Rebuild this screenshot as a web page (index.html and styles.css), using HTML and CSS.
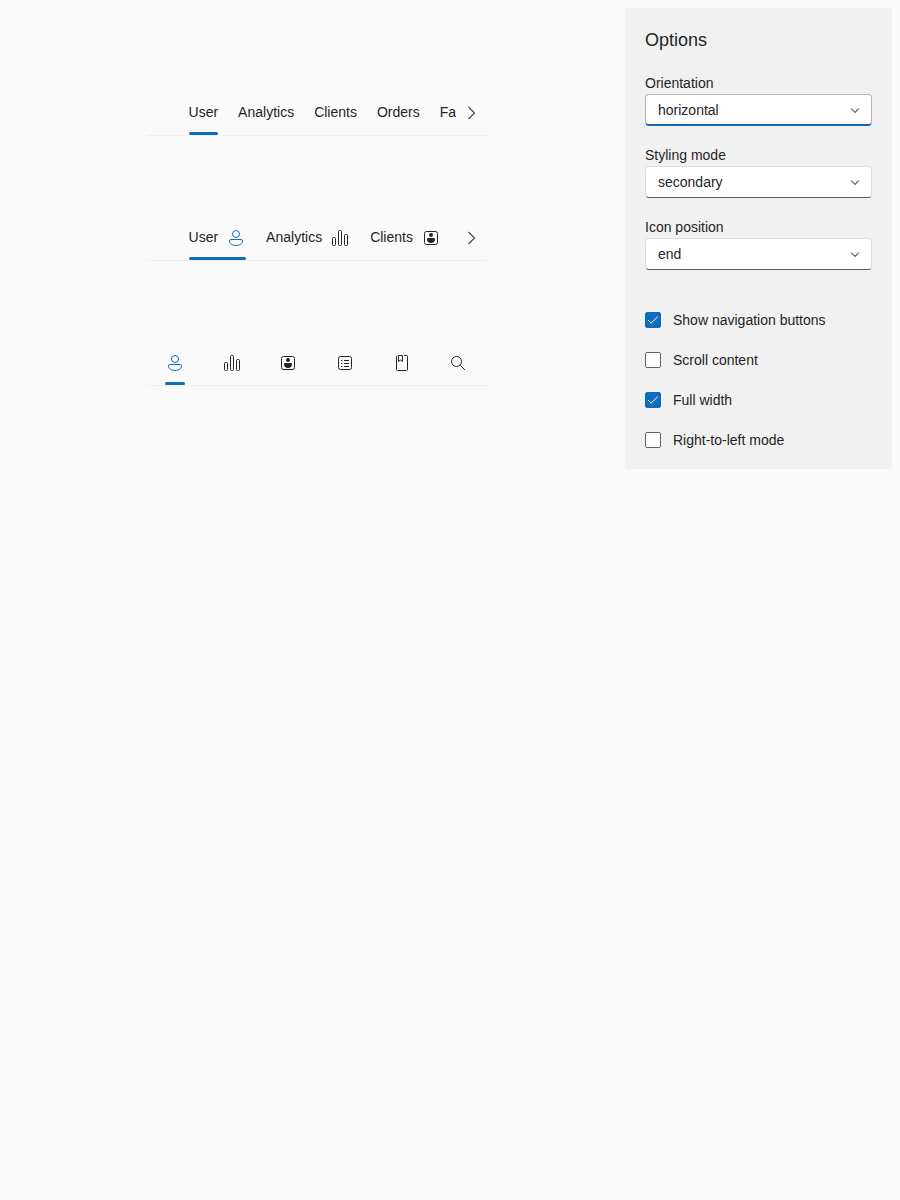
FILE: index.html
```html
<!DOCTYPE html>
<html lang="en">
<head>
<meta charset="utf-8">
<title>Tabs</title>
<link rel="stylesheet" href="styles.css">
</head>
<body>
<svg class="sprite" aria-hidden="true">
  <symbol id="user" viewBox="0 0 20 20"><circle cx="10" cy="6" r="3.5"/><path d="M5 11.5h10a1.5 1.5 0 0 1 1.5 1.5c0 2.7-2.6 4.5-6.5 4.5S3.5 15.7 3.5 13A1.5 1.5 0 0 1 5 11.5z"/></symbol>
  <symbol id="chart" viewBox="0 0 20 20"><rect x="2.5" y="9.5" width="3" height="8" rx="1"/><rect x="8.5" y="2.5" width="3" height="15" rx="1"/><rect x="14.5" y="6.5" width="3" height="11" rx="1"/></symbol>
  <symbol id="contact" viewBox="0 0 20 20"><rect x="3.5" y="3.5" width="13" height="13" rx="2"/><circle class="solid" cx="10" cy="7" r="2"/><path class="solid" d="M7 10h6a1 1 0 0 1 1 1c0 2.500-1.500 4-4 4s-4-1.500-4-4a1 1 0 0 1 1-1z"/></symbol>
  <symbol id="list" viewBox="0 0 20 20"><rect x="3.5" y="3.5" width="13" height="13" rx="2"/><path d="M9 7.5h5M9 10.5h5M9 13.5h5M6 7.5h1.300M6 10.5h1.300M6 13.5h1.300"/></symbol>
  <symbol id="book" viewBox="0 0 20 20"><path d="M6.5 2.5v6l2-1.500 2 1.500v-6zM12 2.5h2.500a1 1 0 0 1 1 1v13a1 1 0 0 1-1 1h-9a1 1 0 0 1-1-1V3.500c0-.4.2-.7.500-.9"/></symbol>
  <symbol id="search" viewBox="0 0 20 20"><circle cx="8.5" cy="8.5" r="5"/><path d="M12.2 12.2l4.700 4.700"/></symbol>
  <symbol id="next" viewBox="0 0 20 20"><path d="M6.500 4l6 6-6 6"/></symbol>
  <symbol id="down" viewBox="0 0 16 16"><path d="M4.200 6.700l3.800 3.800 3.800-3.800"/></symbol>
  <symbol id="check" viewBox="0 0 16 16"><path d="M3 8l3.200 3.200 6.500-6.700"/></symbol>
</svg>
<div class="demo">
  <main class="widgets">
    <div class="tabs">
      <div class="nav"></div>
      <div class="scroller">
        <div class="tab selected"><span>User</span></div>
        <div class="tab"><span>Analytics</span></div>
        <div class="tab"><span>Clients</span></div>
        <div class="tab"><span>Orders</span></div>
        <div class="tab"><span>Fa</span></div>
      </div>
      <div class="nav next"><svg class="icon"><use href="#next"/></svg></div>
    </div>
    <div class="tabs">
      <div class="nav"></div>
      <div class="scroller">
        <div class="tab selected"><span>User</span><svg class="icon"><use href="#user"/></svg></div>
        <div class="tab"><span>Analytics</span><svg class="icon"><use href="#chart"/></svg></div>
        <div class="tab"><span>Clients</span><svg class="icon"><use href="#contact"/></svg></div>
      </div>
      <div class="nav next"><svg class="icon"><use href="#next"/></svg></div>
    </div>
    <div class="tabs stretched">
      <div class="tab selected"><svg class="icon"><use href="#user"/></svg></div>
      <div class="tab"><svg class="icon"><use href="#chart"/></svg></div>
      <div class="tab"><svg class="icon"><use href="#contact"/></svg></div>
      <div class="tab"><svg class="icon"><use href="#list"/></svg></div>
      <div class="tab"><svg class="icon"><use href="#book"/></svg></div>
      <div class="tab"><svg class="icon"><use href="#search"/></svg></div>
    </div>
  </main>
  <aside class="options">
    <h2 class="title">Options</h2>
    <div class="field"><div class="label">Orientation</div><div class="select focused"><span>horizontal</span><svg class="arrow"><use href="#down"/></svg></div></div>
    <div class="field"><div class="label">Styling mode</div><div class="select"><span>secondary</span><svg class="arrow"><use href="#down"/></svg></div></div>
    <div class="field"><div class="label">Icon position</div><div class="select"><span>end</span><svg class="arrow"><use href="#down"/></svg></div></div>
    <div class="checks">
      <div class="check"><span class="box checked"><svg class="mark"><use href="#check"/></svg></span><span>Show navigation buttons</span></div>
      <div class="check"><span class="box"></span><span>Scroll content</span></div>
      <div class="check"><span class="box checked"><svg class="mark"><use href="#check"/></svg></span><span>Full width</span></div>
      <div class="check"><span class="box"></span><span>Right-to-left mode</span></div>
    </div>
  </aside>
</div>
</body>
</html>
```
FILE: styles.css
```css
* { box-sizing: border-box; }
body {
  margin: 8px;
  background: #fafafa;
  color: #242424;
  font: 14px/20px "Liberation Sans", Arial, sans-serif;
}
.sprite { display: none; }
.demo { display: flex; justify-content: space-between; align-items: flex-start; }
.widgets {
  display: flex;
  flex-direction: column;
  gap: 79px;
  width: 340px;
  margin: 82px 0 0 138.55px;
}
.tabs { display: flex; height: 46px; border-bottom: 1px solid #f0f0f0; }
.nav {
  display: flex;
  flex: 0 0 32px;
  align-items: center;
  justify-content: center;
  color: #424242;
}
.next { flex-basis: 31px; padding-left: 1px; }
.next .icon { stroke-width: 1.1; }
.scroller { display: flex; flex: 1; min-width: 0; overflow: hidden; }
.tab {
  position: relative;
  display: flex;
  flex: none;
  gap: 8px;
  align-items: center;
  justify-content: center;
  padding: 0 10px;
  height: 45px;
}
.tab > span { margin-bottom: 1px; }
.selected::after {
  content: "";
  position: absolute;
  left: 10px;
  right: 10px;
  bottom: 0;
  height: 3px;
  border-radius: 1.5px;
  background: #0f6cbd;
}
.stretched .tab { flex: 1; }
.stretched .selected::after { left: 18.33px; right: 18.33px; }
.selected .icon { color: #0f6cbd; }
.icon {
  display: block;
  width: 20px;
  height: 20px;
  fill: none;
  stroke: currentColor;
  stroke-width: 1;
}
.solid { fill: currentColor; stroke: none; }

.options { width: 267px; height: 461px; padding: 20px; background: #f1f1f1; }
.title { margin: 0 0 21px; font-size: 18px; line-height: 24px; font-weight: 400; }
.field { margin-bottom: 20px; }
.label { line-height: 20px; height: 21px; }
.select {
  display: flex;
  align-items: center;
  justify-content: space-between;
  height: 32px;
  margin-bottom: -1px;
  padding: 0 8px 0 12px;
  border: 1px solid #dedede;
  border-bottom-color: #616161;
  border-radius: 4px;
  background: #fff;
}
.focused { border-color: #b3b3b3; border-bottom: 2px solid #0f6cbd; }
.arrow { width: 16px; height: 16px; fill: none; stroke: #616161; stroke-width: 1.1; }
.checks { display: flex; flex-direction: column; gap: 20px; padding-top: 21px; }
.check { display: flex; align-items: center; gap: 12px; }
.box {
  width: 16px;
  height: 16px;
  border: 1px solid #616161;
  border-radius: 2px;
  background: #fff;
}
.checked { border-color: #0f6cbd; background: #0f6cbd; }
.mark { display: block; width: 16px; height: 16px; margin: -1px; fill: none; stroke: #fff; stroke-width: 1; }
```
